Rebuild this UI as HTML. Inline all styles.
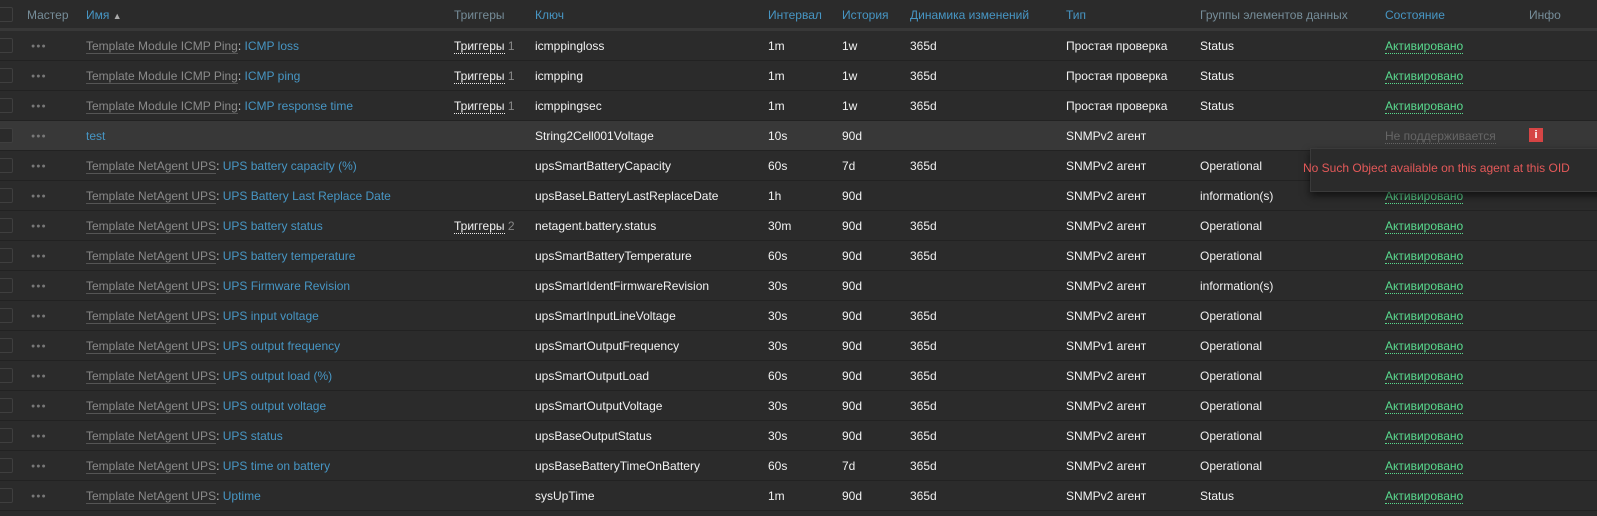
<!DOCTYPE html><html><head><meta charset="utf-8"><style>
body{margin:0;width:1597px;height:516px;background:#2b2b2b;font-family:"Liberation Sans",Arial,sans-serif;font-size:12px;color:#f2f2f2;overflow:hidden;position:relative}
.r{position:absolute;left:0;width:1597px;height:29px;border-bottom:1px solid #222}
.r span{position:absolute;top:8px;white-space:nowrap}
.cb{position:absolute;left:-2px;top:7px;width:13px;height:13px;border:1px solid #3f3f3f;background:#2b2b2b;border-radius:2px}
.h{color:#768d99}
.hl{color:#4796c4}
.tpl{color:#8a8a8a;border-bottom:1px solid #555}
.nm{color:#4796c4}
.dots{color:#787878;font-size:7px;letter-spacing:1px;left:31px;top:12px!important}
.tr{border-bottom:1px dotted #eee;color:#f2f2f2}
.n{color:#888}
.st{color:#59db8f;border-bottom:1px dotted #59db8f}
</style></head><body>
<div class="r" style="top:0;height:28px;border-bottom:3px solid #383838">
<div class="cb"></div>
<span class="h" style="left:27px">Мастер</span>
<span class="hl" style="left:86px">Имя <span style="position:static;font-size:9px;color:#aaa">▲</span></span>
<span class="h" style="left:454px">Триггеры</span>
<span class="hl" style="left:535px">Ключ</span>
<span class="hl" style="left:768px">Интервал</span>
<span class="hl" style="left:842px">История</span>
<span class="hl" style="left:910px">Динамика изменений</span>
<span class="hl" style="left:1066px">Тип</span>
<span class="h" style="left:1200px">Группы элементов данных</span>
<span class="hl" style="left:1385px">Состояние</span>
<span class="h" style="left:1529px">Инфо</span>
</div>
<div id="rows"></div>
<script>
var d=[
["Template Module ICMP Ping","ICMP loss",1,"icmppingloss","1m","1w","365d","Простая проверка","Status"],
["Template Module ICMP Ping","ICMP ping",1,"icmpping","1m","1w","365d","Простая проверка","Status"],
["Template Module ICMP Ping","ICMP response time",1,"icmppingsec","1m","1w","365d","Простая проверка","Status"],
["","test",0,"String2Cell001Voltage","10s","90d","","SNMPv2 агент",""],
["Template NetAgent UPS","UPS battery capacity (%)",0,"upsSmartBatteryCapacity","60s","7d","365d","SNMPv2 агент","Operational"],
["Template NetAgent UPS","UPS Battery Last Replace Date",0,"upsBaseLBatteryLastReplaceDate","1h","90d","","SNMPv2 агент","information(s)"],
["Template NetAgent UPS","UPS battery status",2,"netagent.battery.status","30m","90d","365d","SNMPv2 агент","Operational"],
["Template NetAgent UPS","UPS battery temperature",0,"upsSmartBatteryTemperature","60s","90d","365d","SNMPv2 агент","Operational"],
["Template NetAgent UPS","UPS Firmware Revision",0,"upsSmartIdentFirmwareRevision","30s","90d","","SNMPv2 агент","information(s)"],
["Template NetAgent UPS","UPS input voltage",0,"upsSmartInputLineVoltage","30s","90d","365d","SNMPv2 агент","Operational"],
["Template NetAgent UPS","UPS output frequency",0,"upsSmartOutputFrequency","30s","90d","365d","SNMPv1 агент","Operational"],
["Template NetAgent UPS","UPS output load (%)",0,"upsSmartOutputLoad","60s","90d","365d","SNMPv2 агент","Operational"],
["Template NetAgent UPS","UPS output voltage",0,"upsSmartOutputVoltage","30s","90d","365d","SNMPv2 агент","Operational"],
["Template NetAgent UPS","UPS status",0,"upsBaseOutputStatus","30s","90d","365d","SNMPv2 агент","Operational"],
["Template NetAgent UPS","UPS time on battery",0,"upsBaseBatteryTimeOnBattery","60s","7d","365d","SNMPv2 агент","Operational"],
["Template NetAgent UPS","Uptime",0,"sysUpTime","1m","90d","365d","SNMPv2 агент","Status"]];
var h="";
d.forEach(function(x,i){
var top=31+i*30;
h+='<div class="r" style="top:'+top+'px;'+(i==3?'background:#383838':'')+'"><div class="cb"></div><span class="dots">●●●</span>';
h+='<span style="left:86px">'+(x[0]?'<span class="tpl" style="position:static">'+x[0]+'</span><span style="position:static;color:#ccc">: </span>':'')+'<span class="nm" style="position:static">'+x[1]+'</span></span>';
if(x[2])h+='<span style="left:454px"><span class="tr" style="position:static">Триггеры</span> <span class="n" style="position:static">'+x[2]+'</span></span>';
h+='<span style="left:535px">'+x[3]+'</span><span style="left:768px">'+x[4]+'</span><span style="left:842px">'+x[5]+'</span><span style="left:910px">'+x[6]+'</span><span style="left:1066px">'+x[7]+'</span><span style="left:1200px">'+x[8]+'</span>';
if(i==3)h+='<span style="left:1385px;color:#666;border-bottom:1px dotted #666">Не поддерживается</span><span style="left:1529px;top:7px;width:14px;height:14px;background:#d64545;color:#fff;font-size:11px;font-weight:bold;text-align:center;line-height:14px">i</span>';
else h+='<span class="st" style="left:1385px">Активировано</span>';
h+='</div>';});
document.getElementById("rows").innerHTML=h;
</script>
<div style="position:absolute;left:1310px;top:148px;width:300px;height:42px;background:#2b2b2b;border:1px solid #3a3a3a;box-shadow:0 4px 8px rgba(0,0,0,.6)"></div>
<div style="position:absolute;left:1303px;top:161px;white-space:nowrap;color:#e45959;font-size:12px">No Such Object available on this agent at this OID</div>
</body></html>
